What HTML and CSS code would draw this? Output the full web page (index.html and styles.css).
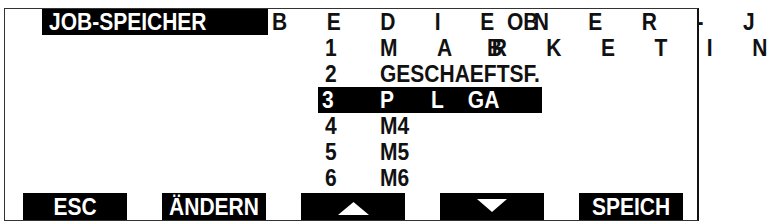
FILE: index.html
```html
<!DOCTYPE html>
<html lang="de">
<head>
  <meta charset="UTF-8">
  <meta name="viewport" content="width=device-width, initial-scale=1.0">
  <title>Job-Speicher</title>
  <link rel="stylesheet" href="styles.css">
</head>
<body>
  <div class="screen">
    <div class="head">
      <div class="title"><span class="tall">JOB-SPEICHER</span></div>
      <div class="spaced tall">BEDIENER-J</div>
    </div>
    <span class="ghost ghost-ob tall">OB</span>
    <span class="ghost ghost-b tall">B</span>

    <ul class="jobs">
      <li><span class="num tall">1</span><span class="name spaced tall">MARKETIN</span></li>
      <li><span class="num tall">2</span><span class="name tall">GESCHAEFTSF.</span></li>
      <li class="active"><span class="num tall">3</span><span class="name tall"><span class="gap-p">P</span><span class="gap-l">L</span>GA</span></li>
      <li><span class="num tall">4</span><span class="name tall">M4</span></li>
      <li><span class="num tall">5</span><span class="name tall">M5</span></li>
      <li><span class="num tall">6</span><span class="name tall">M6</span></li>
    </ul>

    <div class="softkeys">
      <div class="key"><span class="tall">ESC</span></div>
      <div class="key"><span class="tall">ÄNDERN</span></div>
      <div class="key key-up">
        <svg width="31" height="13" viewBox="0 0 31 13"><polygon points="15.5,0 31,13 0,13" fill="#fff"/></svg>
      </div>
      <div class="key key-down">
        <svg width="30" height="13" viewBox="0 0 30 13"><polygon points="0,0 30,0 15,13" fill="#fff"/></svg>
      </div>
      <div class="key"><span class="tall">SPEICH</span></div>
    </div>
  </div>
</body>
</html>
```

FILE: styles.css
```css
* {
  margin: 0;
  padding: 0;
  box-sizing: border-box;
}

html, body {
  overflow: hidden;
}

body {
  font-family: 'Liberation Sans', Arial, sans-serif;
  font-weight: bold;
  font-size: 21px;
  color: #111;
  background-color: #fff;
  width: 773px;
  height: 223px;
}

/* the LCD font is narrow and tall */
.tall {
  display: inline-block;
  transform: scaleY(1.12);
}

.screen {
  position: relative;
  margin: 8px 0 0 4px;
  width: 695px;
  height: 213px;
  border: 1px solid #333;
  border-right: 2px solid #111;
}

.head {
  display: flex;
  height: 26px;
  line-height: 26px;
  white-space: nowrap;
}

.title {
  flex-shrink: 0;
  margin-left: 37px;
  width: 226px;
  padding-left: 7px;
  background-color: #000;
  color: #fff;
}

.head .spaced {
  margin-left: 4px;
}

.spaced {
  letter-spacing: 39.5px;
  white-space: nowrap;
}

/* overlapping glyphs from the display glitch */
.ghost {
  position: absolute;
  line-height: 26px;
}

.ghost-ob {
  left: 502px;
  top: 0;
}

.ghost-b {
  left: 482px;
  top: 26px;
}

.jobs {
  list-style: none;
  margin-left: 313px;
  width: 224px;
}

.jobs li {
  display: flex;
  height: 26px;
  line-height: 26px;
  white-space: nowrap;
}

.num {
  flex-shrink: 0;
  width: 62px;
  padding-left: 7px;
}

.jobs li.active {
  background-color: #000;
  color: #fff;
}

.jobs li.active .num {
  padding-left: 4px;
}

.gap-p {
  margin-right: 37px;
}

.gap-l {
  margin-right: 24px;
}

.softkeys {
  display: flex;
  gap: 35px;
  margin: 2px 0 0 18px;
}

.key {
  flex-shrink: 0;
  width: 104px;
  height: 27px;
  line-height: 27px;
  background-color: #000;
  color: #fff;
  display: flex;
  justify-content: center;
  align-items: center;
}

.key-up svg {
  margin-top: 4px;
}

.key-down svg {
  margin-top: -2px;
}
```
